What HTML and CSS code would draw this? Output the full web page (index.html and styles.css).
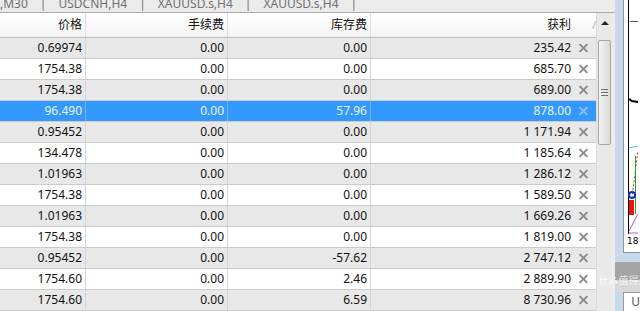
FILE: index.html
```html
<!DOCTYPE html>
<html lang="zh-CN">
<head>
    <meta charset="UTF-8">
    <title>交易 - 终端</title>
    <link rel="stylesheet" href="styles.css">
</head>
<body>
<div class="screen">
    <div class="main">
        <div class="tabs">
            <span>,M30</span><span class="sep">|</span>
            <span>USDCNH,H4</span><span class="sep">|</span>
            <span>XAUUSD.s,H4</span><span class="sep">|</span>
            <span>XAUUSD.s,H4</span><span class="sep">|</span>
        </div>
        <div class="terminal">
            <div class="grid">
                <div class="row head">
                    <div class="cell">价格</div>
                    <div class="cell">手续费</div>
                    <div class="cell">库存费</div>
                    <div class="cell profit"><span class="val">获利</span><span class="sort">/</span></div>
                </div>
                <div class="row odd">
                    <div class="cell">0.69974</div><div class="cell">0.00</div><div class="cell">0.00</div>
                    <div class="cell profit"><span class="val">235.42</span><span class="close"></span></div>
                </div>
                <div class="row">
                    <div class="cell">1754.38</div><div class="cell">0.00</div><div class="cell">0.00</div>
                    <div class="cell profit"><span class="val">685.70</span><span class="close"></span></div>
                </div>
                <div class="row odd">
                    <div class="cell">1754.38</div><div class="cell">0.00</div><div class="cell">0.00</div>
                    <div class="cell profit"><span class="val">689.00</span><span class="close"></span></div>
                </div>
                <div class="row selected">
                    <div class="cell">96.490</div><div class="cell">0.00</div><div class="cell">57.96</div>
                    <div class="cell profit"><span class="val">878.00</span><span class="close"></span></div>
                </div>
                <div class="row odd">
                    <div class="cell">0.95452</div><div class="cell">0.00</div><div class="cell">0.00</div>
                    <div class="cell profit"><span class="val">1 171.94</span><span class="close"></span></div>
                </div>
                <div class="row">
                    <div class="cell">134.478</div><div class="cell">0.00</div><div class="cell">0.00</div>
                    <div class="cell profit"><span class="val">1 185.64</span><span class="close"></span></div>
                </div>
                <div class="row odd">
                    <div class="cell">1.01963</div><div class="cell">0.00</div><div class="cell">0.00</div>
                    <div class="cell profit"><span class="val">1 286.12</span><span class="close"></span></div>
                </div>
                <div class="row">
                    <div class="cell">1754.38</div><div class="cell">0.00</div><div class="cell">0.00</div>
                    <div class="cell profit"><span class="val">1 589.50</span><span class="close"></span></div>
                </div>
                <div class="row odd">
                    <div class="cell">1.01963</div><div class="cell">0.00</div><div class="cell">0.00</div>
                    <div class="cell profit"><span class="val">1 669.26</span><span class="close"></span></div>
                </div>
                <div class="row">
                    <div class="cell">1754.38</div><div class="cell">0.00</div><div class="cell">0.00</div>
                    <div class="cell profit"><span class="val">1 819.00</span><span class="close"></span></div>
                </div>
                <div class="row odd">
                    <div class="cell">0.95452</div><div class="cell">0.00</div><div class="cell">-57.62</div>
                    <div class="cell profit"><span class="val">2 747.12</span><span class="close"></span></div>
                </div>
                <div class="row">
                    <div class="cell">1754.60</div><div class="cell">0.00</div><div class="cell">2.46</div>
                    <div class="cell profit"><span class="val">2 889.90</span><span class="close"></span></div>
                </div>
                <div class="row odd">
                    <div class="cell">1754.60</div><div class="cell">0.00</div><div class="cell">6.59</div>
                    <div class="cell profit"><span class="val">8 730.96</span><span class="close"></span></div>
                </div>
            </div>
            <div class="scrollbar">
                <div class="arrow"><span class="tri"></span></div>
                <div class="thumb"><span class="grip"></span></div>
            </div>
        </div>
    </div>

    <div class="side">
        <div class="divider"></div>
        <div class="mdi">
            <div class="chart">
                <svg width="14" height="252" viewBox="0 0 14 252">
                    <line x1="4.5" y1="0" x2="4.5" y2="234" stroke="#000" stroke-width="1"/>
                    <line x1="6" y1="21.5" x2="14" y2="21.5" stroke="#555" stroke-width="1"/>
                    <polyline points="5,99 8,101 14,102" fill="none" stroke="#000" stroke-width="2"/>
                    <line x1="5" y1="148" x2="14" y2="146" stroke="#33cccc" stroke-width="1"/>
                    <line x1="6" y1="214" x2="14" y2="150" stroke="#dd2222" stroke-width="1" stroke-dasharray="2 2"/>
                    <line x1="11.5" y1="156" x2="11.5" y2="214" stroke="#22aa22" stroke-width="1"/>
                    <rect x="5" y="200" width="5" height="15" fill="#ee1111"/>
                    <circle cx="8" cy="195" r="3" fill="none" stroke="#1133cc" stroke-width="2"/>
                    <line x1="5" y1="231" x2="14" y2="214" stroke="#cc55cc" stroke-width="1"/>
                    <line x1="5" y1="233" x2="14" y2="233" stroke="#cc55cc" stroke-width="1"/>
                    <text x="3" y="244" font-size="9" font-family="DejaVu Sans, sans-serif" fill="#000">18</text>
                </svg>
            </div>
            <div class="band"></div>
            <div class="bar"></div>
            <div class="strip"></div>
            <div class="tabbox">U</div>
        </div>
    </div>

    <span class="watermark">值 什么值得买</span>
</div>
</body>
</html>
```

FILE: styles.css
```css
* {
    box-sizing: border-box;
}

body {
    margin: 0;
    width: 640px;
    height: 311px;
    overflow: hidden;
    background-color: #ececec;
    color: #111111;
    font-family: "Noto Sans", "Noto Sans CJK SC", sans-serif;
    font-size: 12px;
}

.screen {
    display: flex;
    height: 311px;
    position: relative;
}

.main {
    width: 615px;
    display: flex;
    flex-direction: column;
    background-color: #ececec;
}

.tabs {
    height: 13px;
    border-bottom: 1px solid #a9a9a9;
    background-color: #ebebeb;
    display: flex;
    align-items: flex-start;
    gap: 12px;
    overflow: hidden;
    white-space: nowrap;
    font-size: 12px;
    line-height: 13px;
    color: #707070;
}

.tabs span {
    margin-top: -3px;
}

.terminal {
    flex: 1;
    display: flex;
    min-height: 0;
}

.grid {
    width: 596px;
    background-color: #ffffff;
}

.row {
    display: grid;
    grid-template-columns: 86px 142px 143px 225px;
    height: 21px;
    border-bottom: 1px solid #cbcbcb;
}

.row.odd {
    background-color: #e8e8e8;
}

.row.head {
    height: 25px;
    border-bottom-color: #bdbdbd;
    background: linear-gradient(#ffffff, #f3f3f4);
}

.cell {
    border-right: 1px solid #d4d4d4;
    text-align: right;
    padding-right: 3px;
    line-height: 20px;
    white-space: nowrap;
}

.row.head .cell {
    line-height: 24px;
    border-right-color: #dedede;
}

.cell.profit {
    border-right: none;
    padding-right: 0;
    display: flex;
    justify-content: flex-end;
    align-items: center;
}

.val {
    margin-right: 5px;
}

.sort {
    width: 20px;
    padding-left: 6px;
    color: #a8a8a8;
    font-size: 10px;
}

.close {
    width: 20px;
    height: 20px;
    position: relative;
}

.close::before,
.close::after {
    content: "";
    position: absolute;
    left: 2px;
    top: 9px;
    width: 11px;
    height: 2px;
    background-color: #8a8a8a;
    transform: rotate(45deg);
}

.close::after {
    transform: rotate(-45deg);
}

.row.selected {
    background-color: #3399ff;
    color: #eaf4ff;
}

.row.selected .cell {
    border-right-color: #78b6f2;
}

.row.selected .close::before,
.row.selected .close::after {
    background-color: #93bfe9;
}

.scrollbar {
    width: 16px;
    background-color: #e9e9e9;
    border-left: 1px solid #dadada;
    display: flex;
    flex-direction: column;
    align-items: center;
}

.arrow {
    height: 19px;
    display: flex;
    align-items: center;
    justify-content: center;
}

.tri {
    width: 0;
    height: 0;
    border-left: 4px solid transparent;
    border-right: 4px solid transparent;
    border-bottom: 4px solid #222222;
}

.thumb {
    margin-top: 8px;
    width: 13px;
    height: 105px;
    border: 1px solid #a6a6a6;
    border-radius: 2px;
    background: linear-gradient(to right, #f4f4f4, #dadada);
    display: flex;
    align-items: center;
    justify-content: center;
}

.grip {
    width: 7px;
    height: 7px;
    border-top: 1px solid #6f6f6f;
    border-bottom: 1px solid #6f6f6f;
    background: linear-gradient(transparent 2px, #6f6f6f 2px, #6f6f6f 3px, transparent 3px);
}

.side {
    width: 25px;
    display: flex;
}

.divider {
    width: 2px;
    background-color: #6e6e6e;
}

.mdi {
    flex: 1;
    display: flex;
    flex-direction: column;
    background-color: #c9d8eb;
}

.chart {
    margin-left: 8px;
    height: 253px;
    background-color: #ffffff;
    border-left: 1px solid #8796a8;
    border-bottom: 1px solid #8796a8;
}

.chart svg {
    display: block;
}

.band {
    height: 9px;
}

.bar {
    height: 18px;
    background-color: #a4a4a4;
}

.strip {
    height: 12px;
    background-color: #d9d9d9;
}

.tabbox {
    flex: 1;
    margin-left: 8px;
    background-color: #ffffff;
    border-top: 1px solid #9a9a9a;
    border-left: 1px solid #9a9a9a;
    padding-left: 7px;
    font-size: 12px;
    line-height: 18px;
    color: #555555;
}

.watermark {
    position: absolute;
    left: 586px;
    top: 272px;
    font-size: 10px;
    color: rgba(255, 255, 255, 0.75);
    white-space: nowrap;
}
```
